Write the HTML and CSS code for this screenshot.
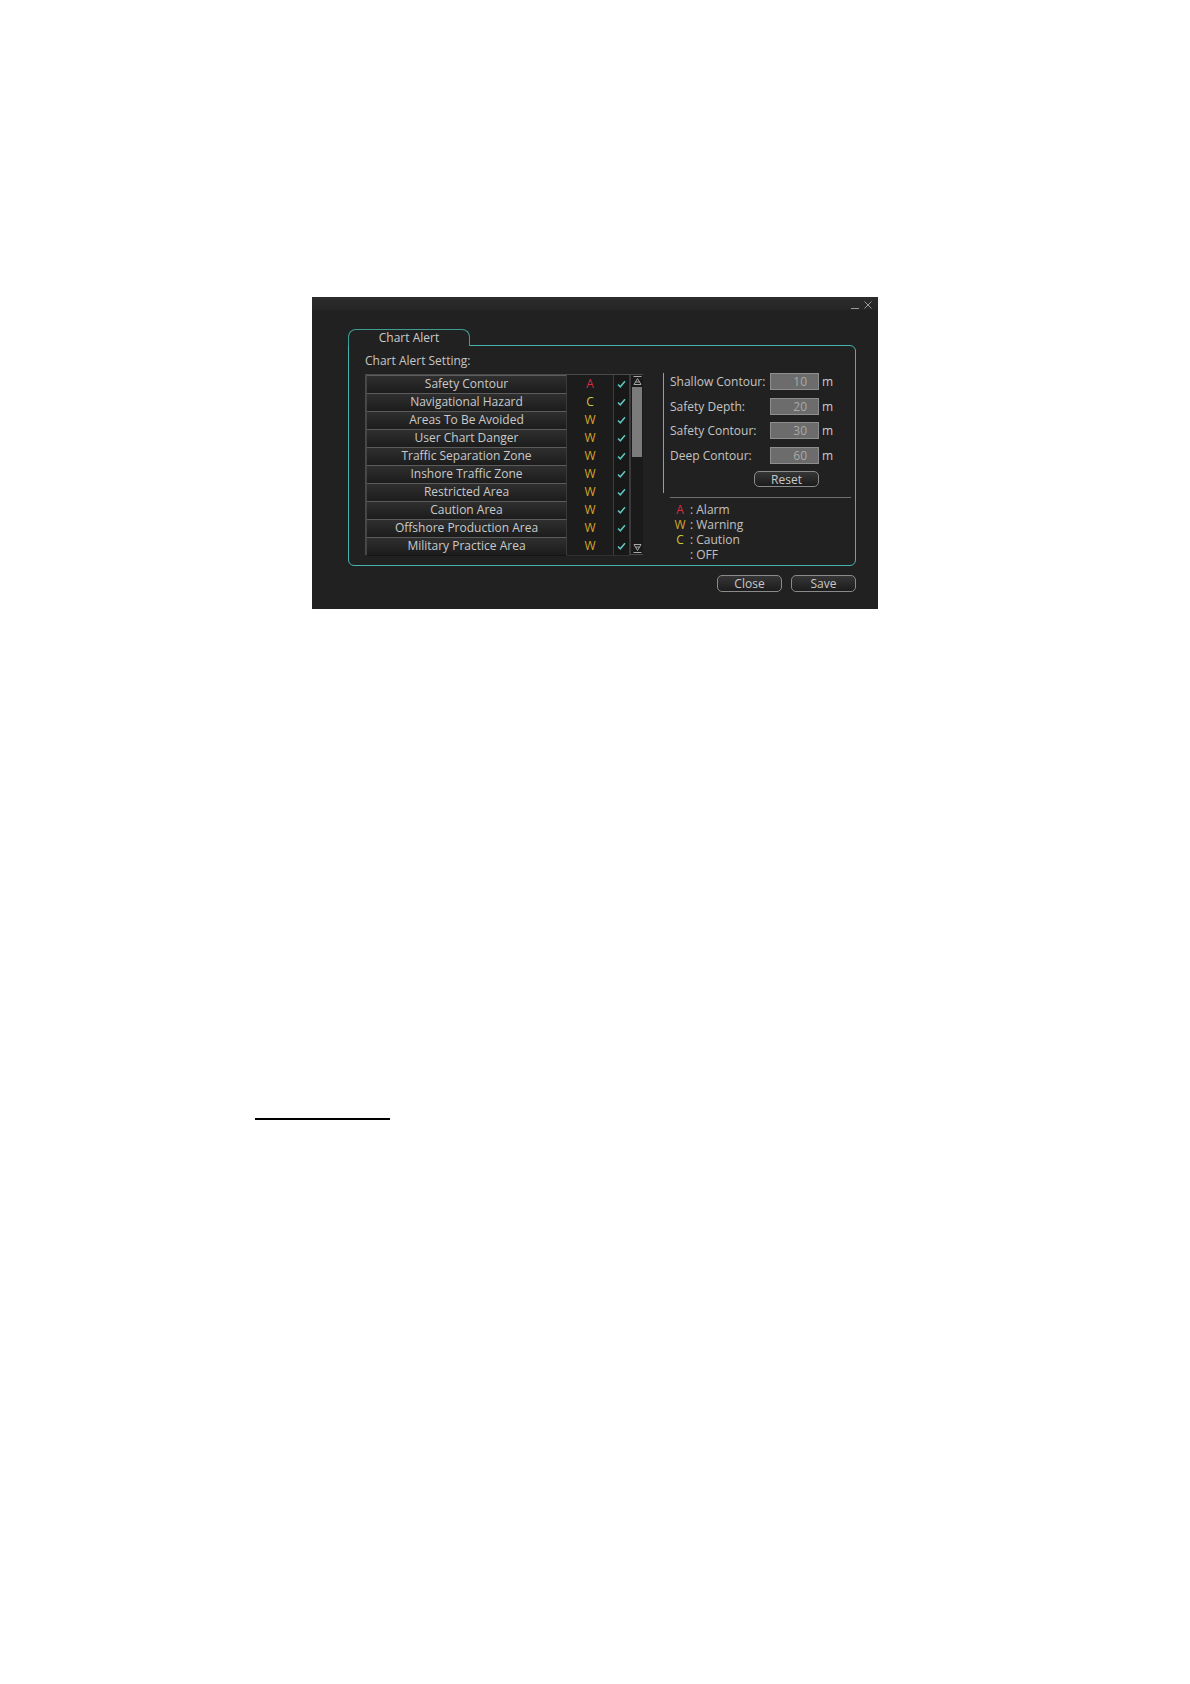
FILE: index.html
```html
<!DOCTYPE html>
<html lang="en">
<head>
<meta charset="utf-8">
<title>Chart Alert</title>
<link rel="stylesheet" href="styles.css">
</head>
<body>
<div class="page">
  <div class="dialog">
    <div class="titlebar">
      <svg class="win-icon" width="8" height="8" viewBox="0 0 8 8"><line x1="0" y1="7.5" x2="8" y2="7.5"/></svg>
      <svg class="win-icon" width="8" height="8" viewBox="0 0 8 8"><line x1="0.5" y1="0.5" x2="7.5" y2="7.5"/><line x1="7.5" y1="0.5" x2="0.5" y2="7.5"/></svg>
    </div>
    <div class="panel">
      <div class="tab">Chart Alert</div>
      <div class="frame">
        <div class="section-label">Chart Alert Setting:</div>
        <div class="content">
          <div class="alert-table">
            <div class="rows">
              <div class="row"><div class="name">Safety Contour</div><div class="code alarm">A</div><div class="chk"><svg width="9" height="8" viewBox="0 0 9 8"><polyline points="1,4.5 3.3,6.8 8,1.2"/></svg></div></div>
              <div class="row"><div class="name">Navigational Hazard</div><div class="code caution">C</div><div class="chk"><svg width="9" height="8" viewBox="0 0 9 8"><polyline points="1,4.5 3.3,6.8 8,1.2"/></svg></div></div>
              <div class="row"><div class="name">Areas To Be Avoided</div><div class="code warning">W</div><div class="chk"><svg width="9" height="8" viewBox="0 0 9 8"><polyline points="1,4.5 3.3,6.8 8,1.2"/></svg></div></div>
              <div class="row"><div class="name">User Chart Danger</div><div class="code warning">W</div><div class="chk"><svg width="9" height="8" viewBox="0 0 9 8"><polyline points="1,4.5 3.3,6.8 8,1.2"/></svg></div></div>
              <div class="row"><div class="name">Traffic Separation Zone</div><div class="code warning">W</div><div class="chk"><svg width="9" height="8" viewBox="0 0 9 8"><polyline points="1,4.5 3.3,6.8 8,1.2"/></svg></div></div>
              <div class="row"><div class="name">Inshore Traffic Zone</div><div class="code warning">W</div><div class="chk"><svg width="9" height="8" viewBox="0 0 9 8"><polyline points="1,4.5 3.3,6.8 8,1.2"/></svg></div></div>
              <div class="row"><div class="name">Restricted Area</div><div class="code warning">W</div><div class="chk"><svg width="9" height="8" viewBox="0 0 9 8"><polyline points="1,4.5 3.3,6.8 8,1.2"/></svg></div></div>
              <div class="row"><div class="name">Caution Area</div><div class="code warning">W</div><div class="chk"><svg width="9" height="8" viewBox="0 0 9 8"><polyline points="1,4.5 3.3,6.8 8,1.2"/></svg></div></div>
              <div class="row"><div class="name">Offshore Production Area</div><div class="code warning">W</div><div class="chk"><svg width="9" height="8" viewBox="0 0 9 8"><polyline points="1,4.5 3.3,6.8 8,1.2"/></svg></div></div>
              <div class="row"><div class="name">Military Practice Area</div><div class="code warning">W</div><div class="chk"><svg width="9" height="8" viewBox="0 0 9 8"><polyline points="1,4.5 3.3,6.8 8,1.2"/></svg></div></div>
            </div>
            <div class="scrollbar">
              <svg class="arrow" width="9" height="9" viewBox="0 0 9 9"><line x1="0.5" y1="0.5" x2="8.5" y2="0.5"/><polyline points="1,8.5 4.5,2.5 8,8.5"/><line x1="1" y1="8.5" x2="8" y2="8.5"/><line x1="2.6" y1="6" x2="6.4" y2="6"/></svg>
              <div class="track"><div class="thumb"></div></div>
              <svg class="arrow" width="9" height="9" viewBox="0 0 9 9"><line x1="0.5" y1="8.5" x2="8.5" y2="8.5"/><polyline points="1,0.5 4.5,6.5 8,0.5"/><line x1="1" y1="0.5" x2="8" y2="0.5"/><line x1="2.6" y1="3" x2="6.4" y2="3"/></svg>
            </div>
          </div>
          <div class="settings">
            <div class="depths">
              <div class="field"><span class="lbl">Shallow Contour:</span><span class="input">10</span><span class="unit">m</span></div>
              <div class="field"><span class="lbl">Safety Depth:</span><span class="input">20</span><span class="unit">m</span></div>
              <div class="field"><span class="lbl">Safety Contour:</span><span class="input">30</span><span class="unit">m</span></div>
              <div class="field"><span class="lbl">Deep Contour:</span><span class="input">60</span><span class="unit">m</span></div>
              <div class="reset-row"><span class="btn reset">Reset</span></div>
            </div>
            <div class="sep"></div>
            <div class="legend">
              <span class="key alarm">A</span><span class="desc">: Alarm</span>
              <span class="key warning">W</span><span class="desc">: Warning</span>
              <span class="key caution">C</span><span class="desc">: Caution</span>
              <span class="key"></span><span class="desc">: OFF</span>
            </div>
          </div>
        </div>
      </div>
    </div>
    <div class="actions">
      <span class="btn">Close</span>
      <span class="btn">Save</span>
    </div>
  </div>
  <div class="rule"></div>
</div>
</body>
</html>
```

FILE: styles.css
```css
* { box-sizing: border-box; }

html, body {
  margin: 0;
  padding: 0;
  background: #ffffff;
}

body {
  width: 1190px;
  height: 1684px;
  font-family: "Open Sans", "Noto Sans", "Liberation Sans", sans-serif;
  font-size: 12px;
  color: #c8c8c8;
}

.page {
  padding-top: 297px;
}

.dialog {
  margin-left: 312px;
  width: 566px;
  height: 312px;
  background: #212121;
  display: flex;
  flex-direction: column;
}

.titlebar {
  height: 13px;
  background: linear-gradient(#2c2c2c, #262626);
  display: flex;
  justify-content: flex-end;
  align-items: center;
  gap: 5px;
  padding-right: 6px;
  padding-top: 2px;
}

.win-icon line {
  stroke: #9a9a9a;
  stroke-width: 1;
}

.panel {
  margin-top: 19px;
  margin-left: 36px;
  width: 508px;
}

.tab {
  position: relative;
  z-index: 1;
  width: 122px;
  height: 17px;
  margin-bottom: -1px;
  border: 1px solid #3f9c94;
  border-bottom: none;
  border-radius: 8px 8px 0 0;
  background: #212121;
  text-align: center;
  line-height: 15px;
  color: #cccccc;
}

.frame {
  height: 221px;
  border: 1px solid #47b4b0;
  border-radius: 0 6px 6px 6px;
  padding: 7px 4px 0 16px;
}

.section-label {
  height: 16px;
  line-height: 16px;
  margin-bottom: 5px;
  color: #c6c6c6;
}

.content {
  display: flex;
  align-items: flex-start;
}

.alert-table {
  display: flex;
  width: 278px;
  height: 181px;
  border: 1px solid #4a4a4a;
}

.rows {
  width: 264px;
  display: flex;
  flex-direction: column;
}

.row {
  display: grid;
  grid-template-columns: 201px 46px 17px;
  height: 18px;
}

.name {
  background: linear-gradient(#2f2f2f, #1c1c1c);
  border-top: 1px solid #5c5c5c;
  border-left: 1px solid #454545;
  border-right: 1px solid #3a3a3a;
  border-bottom: 1px solid #141414;
  text-align: center;
  line-height: 15px;
  color: #cacaca;
  white-space: nowrap;
}

.code {
  background: #1c1c1c;
  border-bottom: 1px solid #303030;
  text-align: center;
  line-height: 18px;
  font-size: 12px;
}

.chk {
  background: #181818;
  border-left: 1px solid #3c3c3c;
  border-right: 1px solid #3c3c3c;
  border-bottom: 1px solid #303030;
  display: flex;
  align-items: center;
  justify-content: center;
}

.chk polyline {
  fill: none;
  stroke: #5ccac2;
  stroke-width: 1.5;
}

.alarm { color: #d62c46; }
.caution { color: #c9c93a; }
.warning { color: #d9a526; }

.scrollbar {
  width: 13px;
  display: flex;
  flex-direction: column;
  align-items: center;
  background: #1a1a1a;
  border-left: 1px solid #3a3a3a;
  padding: 1px 0;
}

.arrow {
  flex: none;
}

.arrow line, .arrow polyline {
  fill: none;
  stroke: #a8a8a8;
  stroke-width: 1;
}

.track {
  flex: 1;
  width: 100%;
  padding: 2px 1px;
}

.thumb {
  width: 10px;
  height: 70px;
  margin: 0 auto;
  background: #7b7b7b;
}

.settings {
  margin-left: 20px;
  margin-top: -1px;
  width: 188px;
}

.depths {
  height: 120px;
  border-left: 1px solid #9a9a9a;
  padding: 0 0 0 6px;
}

.field {
  display: flex;
  align-items: center;
  height: 17px;
  margin-bottom: 7.5px;
  color: #c4c4c4;
}

.lbl {
  width: 100px;
  white-space: nowrap;
}

.input {
  width: 49px;
  height: 17px;
  background: #6c6c6c;
  border: 1px solid #8e8e8e;
  color: #a9a9a9;
  text-align: right;
  padding-right: 11px;
  line-height: 15px;
}

.unit {
  margin-left: 3px;
  color: #cacaca;
}

.reset-row {
  display: flex;
  padding-left: 84px;
  margin-top: 1px;
}

.btn {
  display: inline-flex;
  align-items: center;
  justify-content: center;
  width: 65px;
  height: 17px;
  border: 1px solid #8a8a8a;
  border-radius: 5px;
  background: linear-gradient(#363636, #1c1c1c);
  color: #c8c8c8;
  font-size: 12px;
  line-height: 15px;
}

.reset {
  height: 16px;
}

.sep {
  margin-top: 4px;
  margin-left: 7px;
  width: 181px;
  height: 1px;
  background: #6e6e6e;
}

.legend {
  margin-top: 3.5px;
  margin-left: 9px;
  display: grid;
  grid-template-columns: 16px auto;
  line-height: 15px;
  color: #c2c2c2;
}

.key {
  text-align: center;
}

.desc {
  padding-left: 2px;
}

.actions {
  display: flex;
  justify-content: flex-end;
  gap: 9px;
  margin-top: 9px;
  padding-right: 22px;
}

.rule {
  margin-top: 509px;
  margin-left: 255px;
  width: 135px;
  height: 2px;
  background: #000000;
}
```
